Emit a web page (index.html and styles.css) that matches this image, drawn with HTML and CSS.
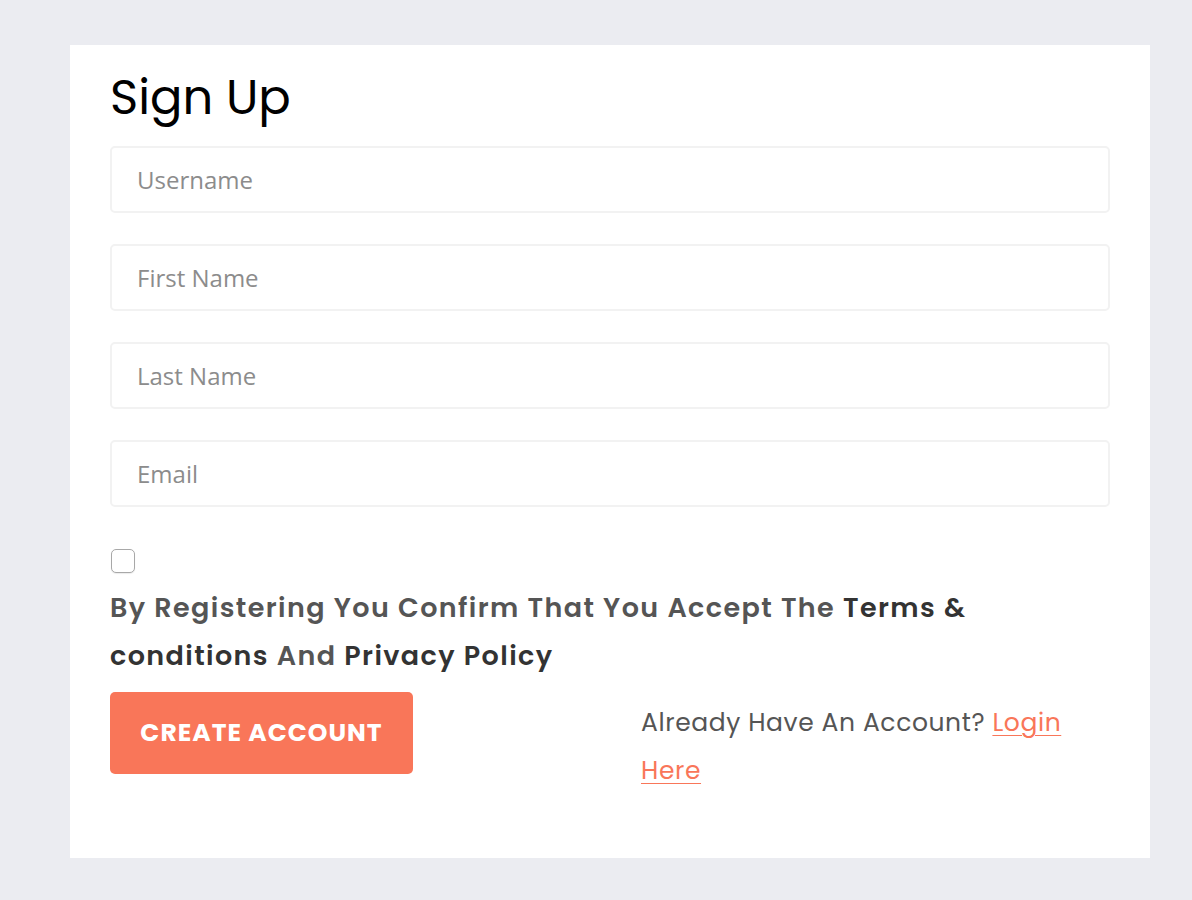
FILE: index.html
```html
<!DOCTYPE html>
<html lang="en">
<head>
    <meta charset="UTF-8">
    <meta name="viewport" content="width=device-width, initial-scale=1.0">
    <title>Sign Up</title>
    <link rel="stylesheet" href="styles.css">
</head>
<body>
    <!-- Sign Up Form -->
    <section class="signup">
        <h2>Sign Up</h2>
        <form class="signup-form">
            <input type="text" placeholder="Username">
            <input type="text" placeholder="First Name">
            <input type="text" placeholder="Last Name">
            <input type="email" placeholder="Email">

            <label class="terms">
                <input type="checkbox" class="terms-check">
                <span class="terms-text">By Registering You Confirm That You Accept The <strong>Terms &amp; conditions</strong> And <strong>Privacy Policy</strong></span>
            </label>

            <div class="form-bottom">
                <div class="form-col">
                    <button type="submit" class="create-btn">Create Account</button>
                </div>
                <div class="form-col">
                    <p class="login-note">Already Have An Account? <a href="#">Login Here</a></p>
                </div>
            </div>
        </form>
    </section>
</body>
</html>
```

FILE: styles.css
```css
/* General Reset */
* {
    margin: 0;
    padding: 0;
    box-sizing: border-box;
}

body {
    background-color: #ebecf1;
    font-family: Poppins, Inter, "Noto Sans", sans-serif;
    padding: 45px 42px 43px 70px;
}

/* Card */
.signup {
    background-color: #fff;
    padding: 24px 40px 63px 40px;
}

.signup h2 {
    font-size: 48px;
    font-weight: 400;
    line-height: 57.6px;
    color: #000;
    margin-bottom: 19px;
}

/* Inputs */
.signup-form input[type="text"],
.signup-form input[type="email"] {
    display: block;
    width: 100%;
    height: 67px;
    padding: 0 25px;
    margin-bottom: 31px;
    border: 2px solid #f2f2f2;
    border-radius: 5px;
    font-family: "Open Sans", sans-serif;
    font-size: 24px;
    color: #555;
    outline: none;
}

.signup-form input::placeholder {
    color: #8c8c8c;
}

/* Terms */
.terms {
    display: block;
    margin-top: 42px;
}

.terms-check {
    appearance: none;
    display: block;
    width: 24px;
    height: 24px;
    margin-left: 1px;
    border: 1px solid #a8a8a8;
    border-radius: 5px;
    background-color: #fff;
    box-shadow: 0 1px 1px rgba(0, 0, 0, 0.08);
    margin-bottom: 11px;
}

.terms-text {
    display: block;
    font-size: 27px;
    font-weight: 600;
    letter-spacing: 1.4px;
    line-height: 48px;
    color: #555;
}

.terms-text strong {
    font-weight: 600;
    color: #333;
}

/* Bottom row */
.form-bottom {
    display: grid;
    grid-template-columns: 1fr 1fr;
    margin-top: 12px;
}

.create-btn {
    width: 303px;
    height: 82px;
    background-color: #f97659;
    color: #fff;
    border: none;
    border-radius: 5px;
    font-family: inherit;
    font-size: 25px;
    font-weight: 700;
    letter-spacing: 1px;
    text-transform: uppercase;
    cursor: pointer;
}

.create-btn:hover {
    background-color: #e8654a;
}

.login-note {
    padding: 7px 40px 0 31px;
    font-size: 25px;
    letter-spacing: 0.6px;
    line-height: 48px;
    color: #555;
}

.login-note a {
    color: #f97659;
    text-decoration: underline;
    text-underline-offset: 4px;
    text-decoration-thickness: 1px;
}
```
